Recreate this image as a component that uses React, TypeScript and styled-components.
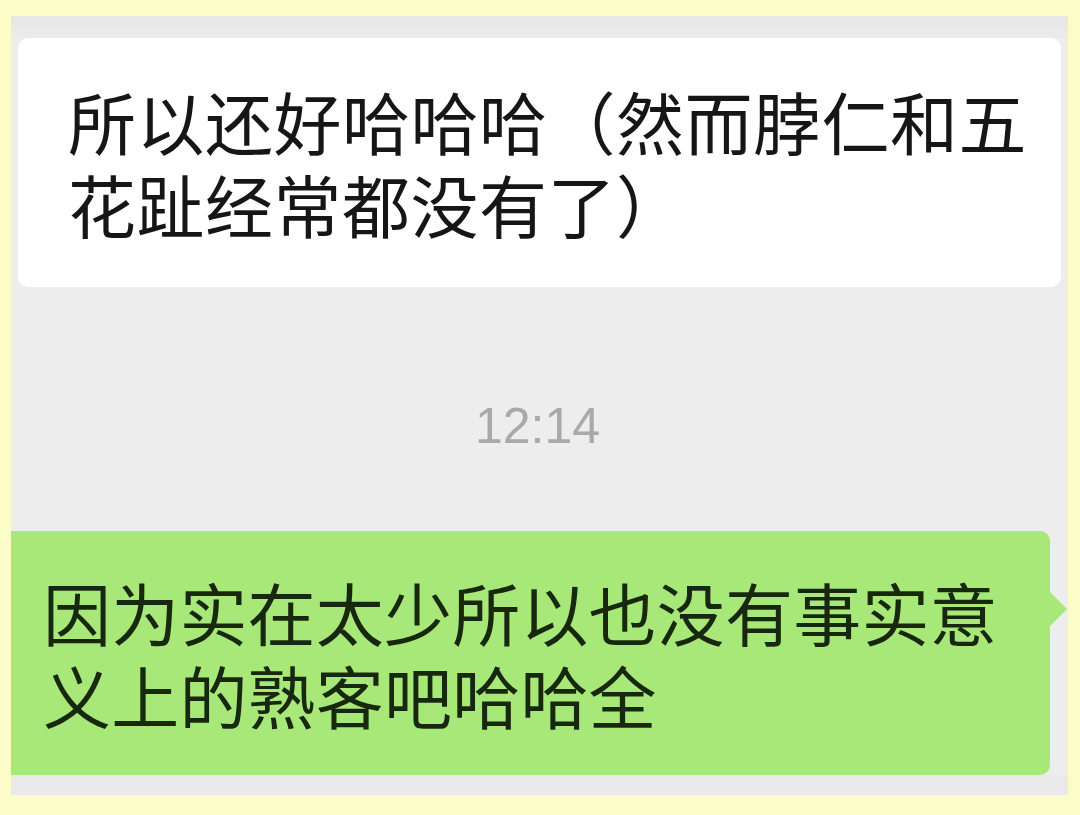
import React from "react";
import styled, { createGlobalStyle } from "styled-components";

const GlobalStyle = createGlobalStyle`
  html, body {
    margin: 0;
    padding: 0;
    background: #fcfcc9;
  }
  body {
    font-family: "Noto Sans CJK SC", "Noto Sans", sans-serif;
  }
`;

const Page = styled.div`
  width: 1080px;
  height: 815px;
  padding: 16px 12px 20px 11px;
  box-sizing: border-box;
`;

const Screen = styled.div`
  height: 779px;
  background: #ededed;
  display: flex;
  flex-direction: column;
  overflow: hidden;
`;

const TopStrip = styled.div`
  height: 22px;
  background: linear-gradient(#e6e6e6, #ebebeb);
`;

const Bubble = styled.div<{ $mine?: boolean }>`
  position: relative;
  box-sizing: border-box;
  border-radius: 10px;
  font-size: 68px;
  line-height: 83px;
  letter-spacing: ${(p) => (p.$mine ? "0.2px" : "0.5px")};
  color: ${(p) => (p.$mine ? "#17280f" : "#161616")};
  background: ${(p) => (p.$mine ? "#a8e879" : "#ffffff")};
  margin: ${(p) => (p.$mine ? "0 18px 0 0" : "0 7px")};
  padding: ${(p) => (p.$mine ? "39px 20px 39px 32px" : "41px 20px 42px 50px")};
  border-top-left-radius: ${(p) => (p.$mine ? "0" : "10px")};
  border-bottom-left-radius: ${(p) => (p.$mine ? "0" : "10px")};
  white-space: nowrap;
`;

const Tail = styled.span`
  position: absolute;
  right: -17px;
  top: 60px;
  width: 0;
  height: 0;
  border-top: 18px solid transparent;
  border-bottom: 18px solid transparent;
  border-left: 18px solid #a8e879;
`;

const Line = styled.div``;

const TimeRow = styled.div`
  flex: 1;
  display: flex;
  align-items: center;
  justify-content: center;
  padding-right: 4px;
`;

const Time = styled.span`
  font-family: "Liberation Sans", Arial, sans-serif;
  font-size: 50px;
  color: #a9a9a9;
  margin-top: 34px;
`;

const BottomStrip = styled.div`
  height: 20px;
  background: #e9e9e9;
`;

const App: React.FC = () => {
  const received = ["所以还好哈哈哈（然而脖仁和五", "花趾经常都没有了）"];
  const sent = ["因为实在太少所以也没有事实意", "义上的熟客吧哈哈全"];
  return (
    <Page>
      <GlobalStyle />
      <Screen>
        <TopStrip />
        <Bubble>
          {received.map((l) => (
            <Line key={l}>{l}</Line>
          ))}
        </Bubble>
        <TimeRow>
          <Time>12:14</Time>
        </TimeRow>
        <Bubble $mine>
          {sent.map((l) => (
            <Line key={l}>{l}</Line>
          ))}
          <Tail />
        </Bubble>
        <BottomStrip />
      </Screen>
    </Page>
  );
};

export default App;
